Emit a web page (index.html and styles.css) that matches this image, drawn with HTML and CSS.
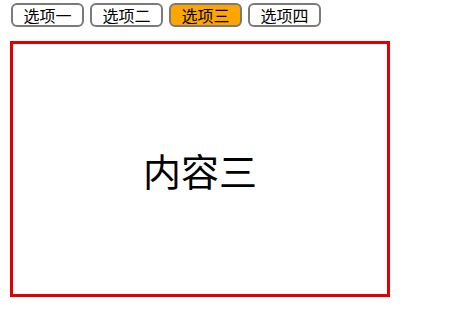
FILE: index.html
```html
<!DOCTYPE html>
<html lang="zh">
<head>
<meta charset="utf-8">
<link rel="stylesheet" href="styles.css">
</head>
<body>
<div class="tabs">
  <button class="tab">选项一</button>
  <button class="tab">选项二</button>
  <button class="tab active">选项三</button>
  <button class="tab">选项四</button>
</div>
<div class="panel">内容三</div>
</body>
</html>
```
FILE: styles.css
```css
html, body {
  margin: 0;
  padding: 0;
  background: #ffffff;
}
body {
  font-family: "Noto Sans CJK SC", "Noto Sans", sans-serif;
}
.tabs {
  display: flex;
  gap: 6px;
  padding: 3px 0 0 11px;
}
.tab {
  box-sizing: border-box;
  width: 73px;
  height: 24px;
  margin: 0;
  padding: 0;
  border: 2px solid #7a7a7a;
  border-radius: 6px;
  background: #ffffff;
  color: #000000;
  font-family: "Noto Sans CJK SC", sans-serif;
  font-size: 16px;
  line-height: 20px;
}
.tab.active {
  background: #ffa500;
}
.panel {
  box-sizing: border-box;
  width: 380px;
  height: 256px;
  margin: 14px 0 0 10px;
  border: 3px solid #e00000;
  display: flex;
  align-items: center;
  justify-content: center;
  font-size: 38px;
  color: #000000;
}
```
